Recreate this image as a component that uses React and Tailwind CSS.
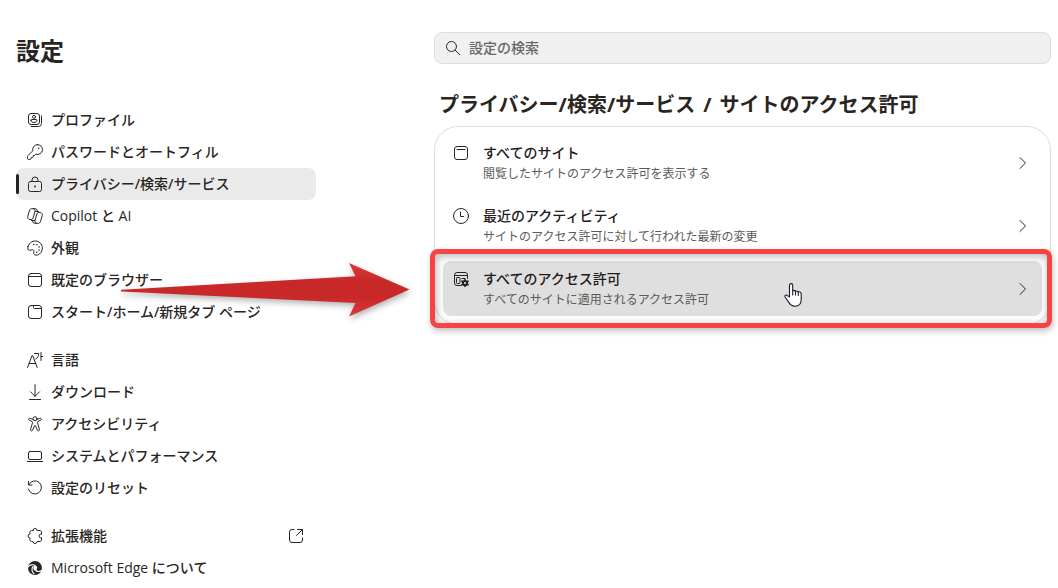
import React from 'react';

function Icon({ children, className = 'size-4' }) {
  return (
    <svg
      viewBox="0 0 16 16"
      fill="none"
      stroke="currentColor"
      strokeWidth="1"
      strokeLinecap="round"
      strokeLinejoin="round"
      aria-hidden="true"
      className={`shrink-0 ${className}`}
    >
      {children}
    </svg>
  );
}

const icons = {
  profile: (
    <>
      <rect x="1.5" y="1.5" width="11" height="11" rx="2.5" />
      <circle cx="7" cy="4.8" r="1.5" />
      <path d="M4 8.2c0-.5.3-.7.7-.7h4.6c.4 0 .7.2.7.7 0 1.400-1.300 2.300-3 2.300s-3-.9-3-2.300Z" />
      <path d="M14.500 4v7.500a3 3 0 0 1-3 3H4" />
    </>
  ),
  key: (
    <>
      <path d="M10.500 .6a4.900 4.900 0 0 0-4.700 6.200L1 11.600c-.3.3-.5.6-.5 1v1.900c0 .5.4.9.9.9h1.800c.5 0 .9-.4.9-.9v-.9h1.300c.4 0 .7-.3.7-.7v-1.300h1.300l1.500-1.500a4.900 4.900 0 1 0 1.600-9.500Z" />
      <circle cx="11.800" cy="4.200" r=".8" fill="currentColor" stroke="none" />
    </>
  ),
  lock: (
    <>
      <rect x="1.500" y="5.500" width="13" height="10" rx="2" />
      <path d="M5 5.500V4a3 3 0 0 1 6 0v1.500" />
      <circle cx="8" cy="10.500" r=".9" fill="currentColor" stroke="none" />
    </>
  ),
  copilot: (
    <>
      <path d="M10.600 3.500 10 1.900C9.800 1.100 9.200.7 8.500.7H4.600c-1 0-1.700.6-2 1.500L.8 8.300c-.4 1.500.3 3.200 2 3.200h1.500c.9 0 1.500-.5 1.700-1.300l2-6.700" />
      <path d="M5.400 12.500 6 14.100c.2.800.8 1.200 1.500 1.200h3.900c1 0 1.700-.6 2-1.500l1.800-6.100c.4-1.500-.3-3.200-2-3.200h-1.500c-.9 0-1.500.5-1.700 1.300l-2 6.700" />
      <path d="M6.500.7c1 0 1.300.7 1.500 1.600l.3 1.200h3.400M9.500 15.300c-1 0-1.300-.7-1.500-1.600l-.3-1.200H4.300" />
    </>
  ),
  palette: (
    <>
      <path d="M1 6.500C2 2.500 6.500-.1 10.700 1.400c3.700 1.400 5.500 5.300 4.300 9-1 3.200-3.700 5-6.200 4.800-1.800-.2-2.400-1.300-2-3 .4-1.500-.1-2.500-1.300-2.500-1.100 0-1.700.7-2.800.7C.9 10.400.5 8.400 1 6.500Z" />
      <g fill="currentColor" stroke="none">
        <circle cx="6.800" cy="4.500" r=".8" />
        <circle cx="10" cy="4.700" r=".8" />
        <circle cx="12.100" cy="7" r=".8" />
        <circle cx="12" cy="10" r=".8" />
        <circle cx="9.800" cy="12.200" r=".8" />
      </g>
    </>
  ),
  browser: (
    <>
      <rect x="1.500" y="1.500" width="13" height="13" rx="2.500" />
      <path d="M1.500 4.500h13" />
    </>
  ),
  tab: (
    <>
      <rect x="1.500" y="1.500" width="13" height="13" rx="2.500" />
      <path d="M6.500 1.500v2c0 .6.400 1 1 1h7" />
    </>
  ),
  language: (
    <path d="M.6 15.500 5 3.500h.6l4.600 12M2.200 11.500h6.500M7.500 1.500h4.200c0 2.600-1 4.300-3 5.500M14 .5v8M14 4.500h1.700" />
  ),
  download: <path d="M8 .6v11.600M3.500 7.800 8 12.300l4.500-4.500M2.500 15.500h11" />,
  accessibility: (
    <>
      <circle cx="8" cy="2.700" r="2" />
      <path d="M6 3.500 3.200 2.300c-1.500-.6-2.300 1.300-1 1.900l3 1.400c.4.200.5.400.4.900l-2 6.700c-.4 1.700 1.500 2.300 2.100.8l1.800-4.200c.2-.5.8-.5 1 0l1.800 4.200c.6 1.500 2.500.9 2.100-.8l-2-6.700c-.1-.5 0-.7.4-.9l3-1.400c1.300-.6.500-2.500-1-1.900L10 3.500" />
    </>
  ),
  laptop: (
    <>
      <rect x="1.500" y="3.500" width="13" height="8" rx="1.500" />
      <path d="M.5 13.500h15" />
    </>
  ),
  reset: <path d="M1.500 1.500v3.500H5M1.800 4.700A6.600 6.600 0 1 1 1.400 9" />,
  puzzle: (
    <path d="M6 2.500a2 2 0 0 1 4 0h3c.8 0 1.500.7 1.500 1.500v2.300h-.8a1.700 1.700 0 0 0 0 3.400h.8V12c0 .8-.7 1.500-1.500 1.500h-3a2 2 0 0 1-4 0H4.500c-.8 0-1.500-.7-1.500-1.500v-2a2 2 0 0 1 0-4V4c0-.8.700-1.500 1.500-1.500H6Z" />
  ),
  edge: (
    <>
      <circle cx="8" cy="8" r="7" fill="currentColor" stroke="none" />
      <path
        d="M1 6.800C3 4.600 6.400 4.200 8.200 5.500M6.200 6.500c-2 2-1.600 5.300.8 7.200M9.300 10.900c1.800.8 4 .6 5.700-.6"
        stroke="white"
        strokeWidth="1.100"
      />
      <path d="M7.800 5.800c2-.2 3.200 1.500 2 3.200-.6.900-.2 1.800.9 2.200-2.600.2-4.300-1-4.300-2.700 0-1 .6-1.900 1.400-2.700Z" fill="white" stroke="none" />
    </>
  ),
  search: (
    <>
      <circle cx="6.500" cy="6.500" r="5" />
      <path d="m10.300 10.300 4.500 4.500" />
    </>
  ),
  window: (
    <>
      <rect x="1.500" y="1.500" width="13" height="13" rx="2.500" />
      <path d="M4 4.500h8" />
    </>
  ),
  clock: (
    <>
      <circle cx="8" cy="8" r="7.500" />
      <path d="M7.500 4v4.500h3" />
    </>
  ),
  permissions: (
    <>
      <path d="M8 14.500H4A2.500 2.500 0 0 1 1.500 12V4A2.500 2.500 0 0 1 4 1.500h8A2.500 2.500 0 0 1 14.500 4v3.500M1.500 4.500h13M9 7.500h3" />
      <rect x="3.500" y="6.500" width="3.500" height="6" rx=".8" />
      <circle cx="12" cy="12" r="2.100" strokeWidth="2" />
      <path d="M12 8.500v1M12 14.500v1M8.900 10.200l1 .6M14.100 13.200l1 .6M8.900 13.800l1-.6M14.100 10.800l1-.6" strokeWidth="1.600" />
    </>
  ),
  external: (
    <path d="M6 1.500H4A2.500 2.500 0 0 0 1.500 4v8A2.500 2.500 0 0 0 4 14.500h8a2.500 2.500 0 0 0 2.500-2.500v-2M9.500 1.500h5v5M14.500 1.500l-6 6" />
  ),
  chevron: <path d="m6 2.500 5.500 5.500L6 13.500" />,
};

function Latin({ children }) {
  return <span className="font-['Open_Sans',sans-serif] font-normal">{children}</span>;
}

const groups = [
  [
    { icon: 'profile', label: 'プロファイル' },
    { icon: 'key', label: 'パスワードとオートフィル' },
    { icon: 'lock', label: 'プライバシー/検索/サービス', current: true },
    {
      icon: 'copilot',
      label: (
        <>
          <Latin>Copilot </Latin>と<Latin> AI</Latin>
        </>
      ),
    },
    { icon: 'palette', label: '外観' },
    { icon: 'browser', label: '既定のブラウザー' },
    { icon: 'tab', label: 'スタート/ホーム/新規タブ ページ' },
  ],
  [
    { icon: 'language', label: '言語' },
    { icon: 'download', label: 'ダウンロード' },
    { icon: 'accessibility', label: 'アクセシビリティ' },
    { icon: 'laptop', label: 'システムとパフォーマンス' },
    { icon: 'reset', label: '設定のリセット' },
  ],
  [
    { icon: 'puzzle', label: '拡張機能', external: true },
    {
      icon: 'edge',
      label: (
        <>
          <Latin>Microsoft Edge </Latin>について
        </>
      ),
    },
  ],
];

const rows = [
  { icon: 'window', title: 'すべてのサイト', text: '閲覧したサイトのアクセス許可を表示する' },
  { icon: 'clock', title: '最近のアクティビティ', text: 'サイトのアクセス許可に対して行われた最新の変更' },
  { icon: 'permissions', title: 'すべてのアクセス許可', text: 'すべてのサイトに適用されるアクセス許可', active: true },
];

function NavItem({ item }) {
  return (
    <li>
      <a
        href="#"
        aria-current={item.current ? 'page' : undefined}
        className={`relative flex h-8 items-center gap-2 rounded-lg pr-3 pl-[11px] text-sm font-medium ${
          item.current ? 'bg-[#eaeaea]' : ''
        }`}
      >
        {item.current && <span className="absolute top-1.5 left-0 h-5 w-[3px] rounded-full bg-[#272320]" />}
        <Icon>{icons[item.icon]}</Icon>
        <span className="flex-1 whitespace-nowrap">{item.label}</span>
        {item.external && <Icon>{icons.external}</Icon>}
      </a>
    </li>
  );
}

function Arrow() {
  return (
    <svg
      viewBox="0 0 300 68"
      aria-hidden="true"
      className="pointer-events-none absolute top-[256px] left-[116px] h-[68px] w-[300px] drop-shadow-[1px_3px_3px_rgba(0,0,0,0.3)]"
    >
      <defs>
        <linearGradient id="arrowFill" x1="0" y1="0" x2="0" y2="1">
          <stop offset="0" stopColor="#dc3a3a" />
          <stop offset=".35" stopColor="#c92828" />
          <stop offset=".65" stopColor="#c92828" />
          <stop offset="1" stopColor="#dc3a3a" />
        </linearGradient>
      </defs>
      <path
        d="M5.500 33.800 239.500 20.300 233 7l60.500 26.500L233 60.500l6.500-13.500L5.500 35.500Q4 34.600 5.500 33.800Z"
        fill="url(#arrowFill)"
      />
    </svg>
  );
}

function HandCursor() {
  return (
    <svg
      viewBox="0 0 20 26"
      aria-hidden="true"
      className="pointer-events-none absolute top-[21px] left-[340px] h-[26px] w-5"
    >
      <path
        d="M6.500 15V3.200a1.600 1.600 0 0 1 3.200 0v5.600q1.500-.9 2.700.4 1.500-.6 2.600.7 2.700-.5 3.200 1.800v6c0 3.600-2.200 6.500-6.200 6.500-3.300 0-4.900-1.600-6.200-3.800l-3.600-5.200c-1.100-1.700.9-3 2.300-1.600L6.500 15Z"
        fill="white"
        stroke="#1c1b2a"
        strokeWidth="1.100"
        strokeLinejoin="round"
      />
      <path d="M9.700 8.500V13M12.500 9.200V13M15.300 10v3.500" stroke="#1c1b2a" strokeWidth="1.100" strokeLinecap="round" />
    </svg>
  );
}

function PermissionRow({ row }) {
  return (
    <li className="relative">
      <a
        href="#"
        className={`flex h-[55px] items-center gap-3.5 rounded-lg pr-3 pl-2.5 ${row.active ? 'bg-[#dfdfdf]' : ''}`}
      >
        <span className="flex h-10 items-start pt-0.5">
          <Icon>{icons[row.icon]}</Icon>
        </span>
        <span className="flex flex-1 flex-col">
          <span className="text-sm leading-[22px] font-medium text-[#1f1b18]">{row.title}</span>
          <span className="text-xs leading-5 text-[#5c5a58]">{row.text}</span>
        </span>
        <Icon>{icons.chevron}</Icon>
      </a>
      {row.active && (
        <>
          <span className="pointer-events-none absolute -top-3 -right-2.5 -bottom-3 -left-[13px] rounded-lg border-[5px] border-[#f64444] shadow-[inset_1px_2px_8px_rgba(0,0,0,0.3),1px_3px_6px_rgba(0,0,0,0.25)]" />
          <HandCursor />
        </>
      )}
    </li>
  );
}

export default function App() {
  return (
    <div className="relative flex min-h-screen bg-white font-['Noto_Sans','Noto_Sans_CJK_JP',sans-serif] text-[#292522]">
      <aside className="w-[316px] shrink-0 pt-8 pl-4">
        <h1 className="text-2xl leading-[38px] font-bold">設定</h1>
        <nav aria-label="設定" className="mt-[34px] flex flex-col gap-4">
          {groups.map((group, i) => (
            <ul key={i}>
              {group.map((item) => (
                <NavItem key={item.icon} item={item} />
              ))}
            </ul>
          ))}
        </nav>
      </aside>

      <main className="ml-[118px] min-w-0 flex-1 pt-8 pr-[7px]">
        <label className="flex h-8 items-center gap-2 rounded-lg border border-[#dedede] bg-[#f0f0f0] px-2.5">
          <Icon>{icons.search}</Icon>
          <input
            type="search"
            aria-label="設定の検索"
            placeholder="設定の検索"
            className="min-w-0 flex-1 bg-transparent text-sm font-medium outline-none placeholder:text-[#696765]"
          />
        </label>
        <h2 className="mt-6 flex gap-2 pl-[5px] text-xl leading-[34px] font-bold whitespace-nowrap">
          <span>プライバシー/検索/サービス</span>
          <span>/</span>
          <span>サイトのアクセス許可</span>
        </h2>
        <ul className="mt-1 flex flex-col gap-2 rounded-3xl border border-[#dedede] p-2">
          {rows.map((row) => (
            <PermissionRow key={row.title} row={row} />
          ))}
        </ul>
      </main>
      <Arrow />
    </div>
  );
}
